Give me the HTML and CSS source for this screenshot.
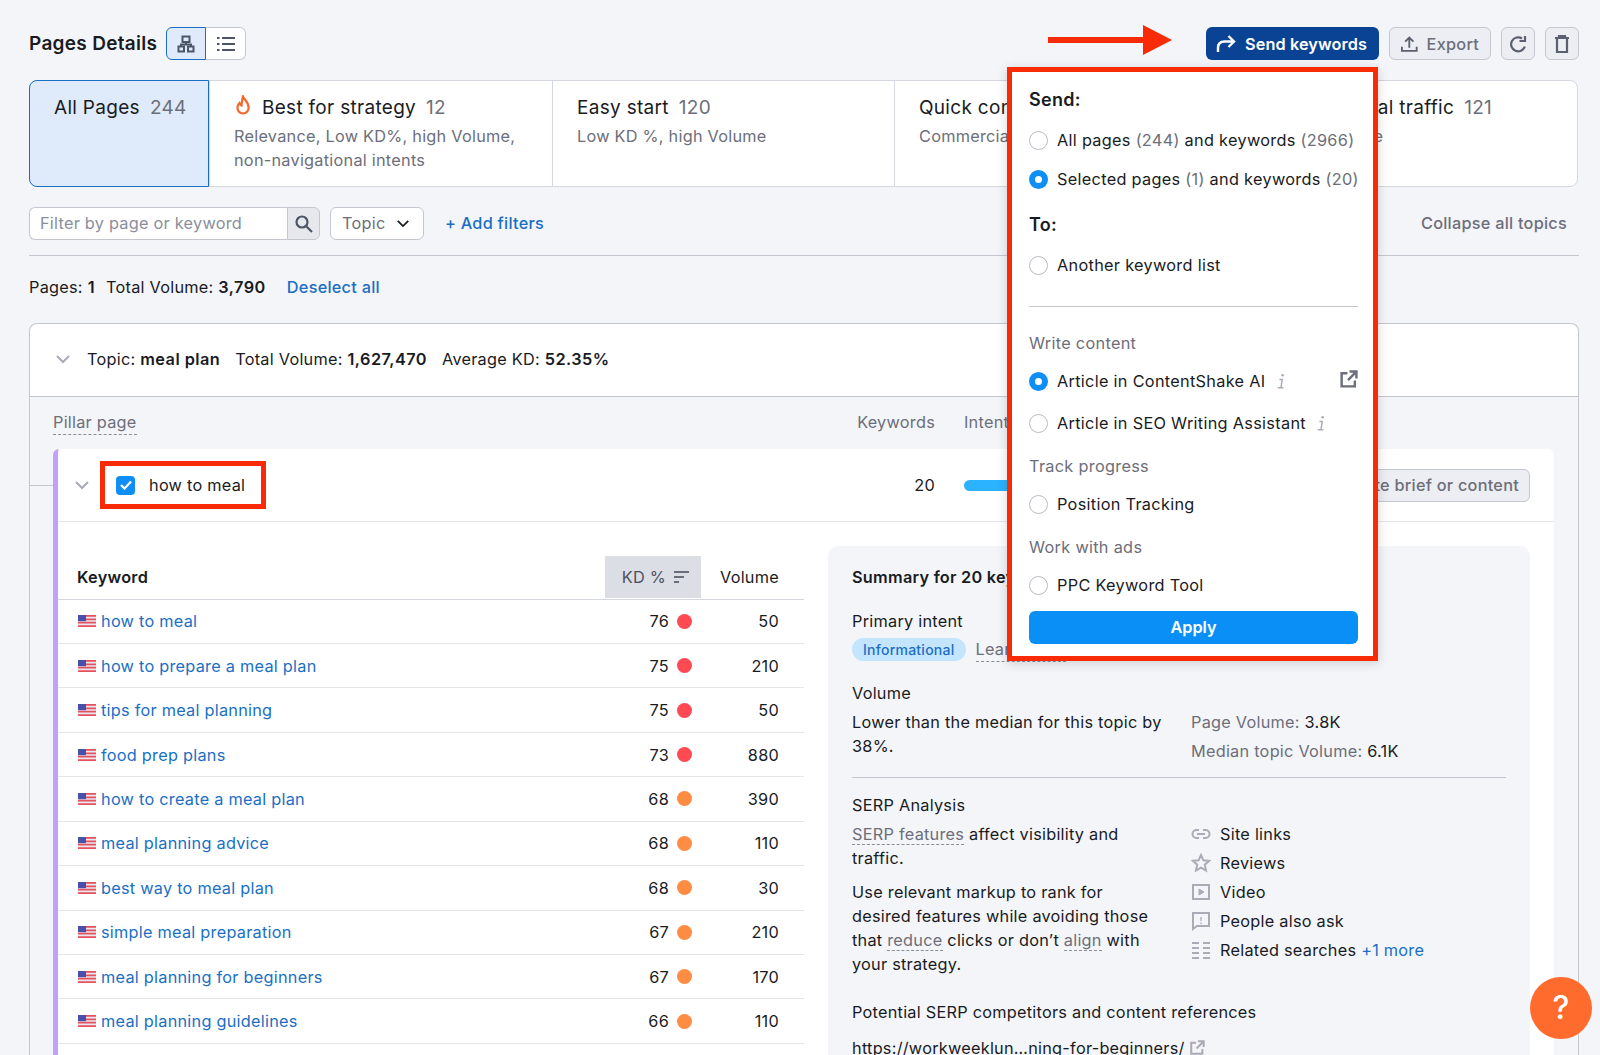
FILE: index.html
```html
<!DOCTYPE html>
<html lang="en">
<head>
<meta charset="utf-8">
<title>Pages Details</title>
<link rel="stylesheet" href="styles.css">
</head>
<body>
<svg class="defs" width="0" height="0" aria-hidden="true">
  <symbol id="flag" viewBox="0 0 18 12">
    <rect width="18" height="12" fill="#e8e8f0"/>
    <path d="M0 .9h18M0 4.3h18M0 7.7h18M0 11.1h18" stroke="#e8505b" stroke-width="1.7"/>
    <rect width="8" height="6.2" fill="#4a4fa8"/>
  </symbol>
  <symbol id="ext" viewBox="0 0 18 18">
    <path d="M8 3H2.500v12.500H15V10M10 1.500h6.500V8M16 2l-7.500 7.500" fill="none" stroke="currentColor" stroke-width="2.300"/>
  </symbol>
  <symbol id="info" viewBox="0 0 10 18">
    <circle cx="6.600" cy="3.200" r="1.300" fill="currentColor"/>
    <path d="M3.500 7.500h2.700l-1.200 8M1.800 15.800h5.600" fill="none" stroke="currentColor" stroke-width="1.500"/>
  </symbol>
  <symbol id="chev" viewBox="0 0 16 10">
    <path d="M2 2l6 6 6-6" fill="none" stroke="currentColor" stroke-width="2"/>
  </symbol>
</svg>

<main class="page">
  <header class="topbar">
    <h1 class="title">Pages Details</h1>
    <div class="toggle">
      <span class="toggle-btn on">
        <svg width="18" height="18" viewBox="0 0 18 18" fill="none" stroke="#4d5666" stroke-width="2"><rect x="5.500" y="1.500" width="7" height="5.500"/><rect x="1.500" y="11.500" width="5.500" height="5"/><rect x="11" y="11.500" width="5.500" height="5"/><path d="M9 7v2.500H4v2M9 9.500h5v2"/></svg>
      </span>
      <span class="toggle-btn">
        <svg width="18" height="18" viewBox="0 0 18 18" fill="none" stroke="#4d5666" stroke-width="2"><path d="M5 3h13M5 9h13M5 15h13M0 3h2.500M0 9h2.500M0 15h2.500"/></svg>
      </span>
    </div>
    <div class="actions">
      <button class="btn primary">
        <svg width="20" height="20" viewBox="0 0 20 20" fill="none" stroke="#fff" stroke-width="2.400"><path d="M2 18v-4c0-4 2.500-6.500 6.500-6.500H18M12.500 2L18 7.500 12.500 13"/></svg>
        Send keywords
      </button>
      <button class="btn ghost">
        <svg width="18" height="18" viewBox="0 0 18 18" fill="none" stroke="#5b6070" stroke-width="2"><path d="M9 13V2.500M4.500 6.500L9 2l4.500 4.500M1 12v4.500h16V12"/></svg>
        Export
      </button>
      <button class="btn ghost square">
        <svg width="18" height="18" viewBox="0 0 18 18" fill="none" stroke="#5b6070" stroke-width="2.200"><path d="M15.800 11.500A7 7 0 1 1 13 3.500"/><path d="M10.500 3.500h5.500V-1.500" transform="translate(0 2.500)"/></svg>
      </button>
      <button class="btn ghost square">
        <svg width="16" height="18" viewBox="0 0 16 18" fill="none" stroke="#5b6070" stroke-width="2.200"><path d="M1 3h14M5 3V1h6v2M3 3v14h10V3"/></svg>
      </button>
    </div>
  </header>

  <nav class="tabs">
    <div class="tab first"><div class="tab-name">All Pages <span class="count">244</span></div></div>
    <div class="tab">
      <div class="tab-name">
        <svg class="fire" width="18" height="21" viewBox="0 0 18 21" fill="none" stroke="#f4682c" stroke-width="2.200"><path d="M9 1.500c1 3 5.500 5.500 5.500 10.500A5.500 5.500 0 0 1 9 18.500 5.500 5.500 0 0 1 3.500 12.500c0-2 1-3.500 2-4.500.5 1.500 1 2 2 2.500C8 7.500 8 4 9 1.500z"/></svg>
        Best for strategy <span class="count">12</span>
      </div>
      <p class="tab-sub">Relevance, Low KD%, high Volume, non-navigational intents</p>
    </div>
    <div class="tab">
      <div class="tab-name">Easy start <span class="count">120</span></div>
      <p class="tab-sub">Low KD %, high Volume</p>
    </div>
    <div class="tab">
      <div class="tab-name">Quick conversions <span class="count">56</span></div>
      <p class="tab-sub">Commercial intent</p>
    </div>
    <div class="tab">
      <div class="tab-name last-name">Informational traffic <span class="count">121</span></div>
      <p class="tab-sub">Large audience</p>
    </div>
  </nav>

  <div class="filters">
    <div class="search">
      <span class="search-input">Filter by page or keyword</span>
      <span class="search-btn">
        <svg width="18" height="18" viewBox="0 0 18 18" fill="none" stroke="#4d5666" stroke-width="2.200"><circle cx="7" cy="7" r="5.500"/><path d="M11 11l6 6"/></svg>
      </span>
    </div>
    <div class="select">Topic <svg class="sel-chev" width="14" height="9"><use href="#chev"/></svg></div>
    <a class="add">+ Add filters</a>
    <span class="collapse">Collapse all topics</span>
  </div>

  <div class="summary-line">Pages: <b>1</b><span class="sp">Total Volume: <b>3,790</b></span><a class="link deselect">Deselect all</a></div>

  <section class="topic">
    <div class="topic-head">
      <svg class="chev" width="16" height="10"><use href="#chev"/></svg>
      <span>Topic: <b>meal plan</b></span>
      <span>Total Volume: <b>1,627,470</b></span>
      <span>Average KD: <b>52.35%</b></span>
    </div>
    <div class="topic-body">
      <div class="col-head">
        <span class="dash grey">Pillar page</span>
        <div class="cols grey">
          <span class="col-kw">Keywords</span>
          <span class="col-int">Intent</span>
        </div>
      </div>
      <div class="connector"></div>
      <article class="pillar">
        <div class="pillar-head">
          <svg class="chev pillar-chev" width="16" height="10"><use href="#chev"/></svg>
          <div class="marked">
            <span class="check"><svg width="12" height="10" viewBox="0 0 12 10" fill="none" stroke="#fff" stroke-width="2.200"><path d="M1 5l3.500 3.500L11 1.500"/></svg></span>
            how to meal
          </div>
          <div class="cols">
            <span class="col-kw">20</span>
            <span class="col-int"><span class="bar"></span></span>
            <button class="btn ghost create">Create brief or content</button>
          </div>
        </div>
        <div class="pillar-body">
          <div class="kw-table">
            <div class="kw-row kw-head">
              <b class="kw-name">Keyword</b>
              <span class="kw-kd sorted">KD %
                <svg width="15" height="12" viewBox="0 0 15 12" fill="none" stroke="#6c6e79" stroke-width="2"><path d="M0 1h15M0 6h10M0 11h5"/></svg>
              </span>
              <span class="kw-vol">Volume</span>
            </div>
            <div class="kw-row"><a class="kw-name"><svg class="flag"><use href="#flag"/></svg>how to meal</a><span class="kw-kd">76 <i class="dot red"></i></span><span class="kw-vol">50</span></div>
            <div class="kw-row"><a class="kw-name"><svg class="flag"><use href="#flag"/></svg>how to prepare a meal plan</a><span class="kw-kd">75 <i class="dot red"></i></span><span class="kw-vol">210</span></div>
            <div class="kw-row"><a class="kw-name"><svg class="flag"><use href="#flag"/></svg>tips for meal planning</a><span class="kw-kd">75 <i class="dot red"></i></span><span class="kw-vol">50</span></div>
            <div class="kw-row"><a class="kw-name"><svg class="flag"><use href="#flag"/></svg>food prep plans</a><span class="kw-kd">73 <i class="dot red"></i></span><span class="kw-vol">880</span></div>
            <div class="kw-row"><a class="kw-name"><svg class="flag"><use href="#flag"/></svg>how to create a meal plan</a><span class="kw-kd">68 <i class="dot orange"></i></span><span class="kw-vol">390</span></div>
            <div class="kw-row"><a class="kw-name"><svg class="flag"><use href="#flag"/></svg>meal planning advice</a><span class="kw-kd">68 <i class="dot orange"></i></span><span class="kw-vol">110</span></div>
            <div class="kw-row"><a class="kw-name"><svg class="flag"><use href="#flag"/></svg>best way to meal plan</a><span class="kw-kd">68 <i class="dot orange"></i></span><span class="kw-vol">30</span></div>
            <div class="kw-row"><a class="kw-name"><svg class="flag"><use href="#flag"/></svg>simple meal preparation</a><span class="kw-kd">67 <i class="dot orange"></i></span><span class="kw-vol">210</span></div>
            <div class="kw-row"><a class="kw-name"><svg class="flag"><use href="#flag"/></svg>meal planning for beginners</a><span class="kw-kd">67 <i class="dot orange"></i></span><span class="kw-vol">170</span></div>
            <div class="kw-row"><a class="kw-name"><svg class="flag"><use href="#flag"/></svg>meal planning guidelines</a><span class="kw-kd">66 <i class="dot orange"></i></span><span class="kw-vol">110</span></div>
          </div>

          <aside class="panel">
            <h3 class="panel-title">Summary for 20 keywords</h3>
            <h4 class="h-intent">Primary intent</h4>
            <div class="intent-row"><span class="pill">Informational</span><span class="dash grey">Learn more</span></div>
            <h4 class="h-volume">Volume</h4>
            <div class="two vol-two">
              <p>Lower than the median for this topic by 38%.</p>
              <div class="vol-stats">
                <div><span class="grey">Page Volume:</span> 3.8K</div>
                <div><span class="grey">Median topic Volume:</span> 6.1K</div>
              </div>
            </div>
            <hr class="panel-rule">
            <h4 class="h-serp">SERP Analysis</h4>
            <div class="two serp-two">
              <div>
                <p><span class="dash grey">SERP features</span> affect visibility and traffic.</p>
                <p class="para2">Use relevant markup to rank for desired features while avoiding those that <span class="dash grey">reduce</span> clicks or don’t <span class="dash grey">align</span> with your strategy.</p>
              </div>
              <ul class="features">
                <li><svg width="20" height="20" viewBox="0 0 20 20" fill="none" stroke="#a9acb6" stroke-width="2"><path d="M8 6H5.500a4 4 0 0 0 0 8H8M12 6h2.500a4 4 0 0 1 0 8H12M6 10h8"/></svg>Site links</li>
                <li><svg width="20" height="20" viewBox="0 0 20 20" fill="none" stroke="#a9acb6" stroke-width="2"><path d="M10 2l2.400 5.300 5.600.6-4.200 3.800 1.200 5.800L10 14.600l-5 2.900 1.200-5.800L2 7.900l5.600-.6z"/></svg>Reviews</li>
                <li><svg width="20" height="20" viewBox="0 0 20 20" fill="none" stroke="#a9acb6" stroke-width="2"><rect x="2" y="3" width="16" height="14"/><path d="M8 7l5 3-5 3z" fill="#a9acb6" stroke-width="1"/></svg>Video</li>
                <li><svg width="20" height="20" viewBox="0 0 20 20" fill="none" stroke="#a9acb6" stroke-width="2"><path d="M2 2h16v13H6l-4 3z"/><path d="M10 6v4M10 11.500v1.500" stroke-width="1.300"/></svg>People also ask</li>
                <li><svg width="20" height="20" viewBox="0 0 20 20" fill="none" stroke="#a9acb6" stroke-width="2"><path d="M1 3h7M12 3h7M1 8h7M12 8h7M1 13h7M12 13h7M1 18h7M12 18h7"/></svg>Related searches <a class="link">+1 more</a></li>
              </ul>
            </div>
            <h4 class="h-comp">Potential SERP competitors and content references</h4>
            <div class="url">https://workweeklun…ning-for-beginners/ <svg class="url-ext" width="16" height="16"><use href="#ext"/></svg></div>
          </aside>
        </div>
      </article>
    </div>
  </section>
</main>

<svg class="arrow" width="124" height="30" viewBox="0 0 124 30"><path d="M0 12h95V0l29 15-29 15V18H0z" fill="#f92a06"/></svg>

<div class="popup">
  <div class="pop-strong">Send:</div>
  <label class="opt m16"><i class="radio"></i>All pages&nbsp;<span class="grey">(244)</span>&nbsp;and keywords&nbsp;<span class="grey">(2966)</span></label>
  <label class="opt m15"><i class="radio sel"></i>Selected pages&nbsp;<span class="grey">(1)</span>&nbsp;and keywords&nbsp;<span class="grey">(20)</span></label>
  <div class="pop-strong m22">To:</div>
  <label class="opt m16"><i class="radio"></i>Another keyword list</label>
  <hr class="pop-rule">
  <div class="pop-group m24">Write content</div>
  <label class="opt m14"><i class="radio sel"></i>Article in ContentShake AI<svg class="info" width="10" height="18"><use href="#info"/></svg><svg class="pop-ext" width="19" height="19"><use href="#ext"/></svg></label>
  <label class="opt m18"><i class="radio"></i>Article in SEO Writing Assistant<svg class="info" width="10" height="18"><use href="#info"/></svg></label>
  <div class="pop-group m19">Track progress</div>
  <label class="opt m14"><i class="radio"></i>Position Tracking</label>
  <div class="pop-group m19">Work with ads</div>
  <label class="opt m14"><i class="radio"></i>PPC Keyword Tool</label>
  <button class="apply">Apply</button>
</div>

<div class="help">?</div>
</body>
</html>
```

FILE: styles.css
```css
* { box-sizing: border-box; }
html, body { margin: 0; height: 1055px; overflow: hidden; }
body {
  position: relative;
  background: #f4f5f9;
  color: #191b23;
  font: 400 16.3px/24px Inter, "Liberation Sans", sans-serif;
  letter-spacing: .25px;
}
.defs { position: absolute; }
b { font-weight: 600; letter-spacing: .45px; }
h1, h3, h4, p, ul { margin: 0; padding: 0; font-weight: 400; font-size: inherit; }
a { color: #1a6fc4; }
hr { border: 0; margin: 0; }
.grey { color: #6c6e79; }
.dash { border-bottom: 1px dashed #8a8e9b; }
.link { color: #1a6fc4; }

.page { height: 1055px; overflow: hidden; padding: 27px 21px 0 29px; }

/* top bar */
.topbar { display: flex; align-items: center; height: 33px; }
.title { font-size: 19px; font-weight: 600; letter-spacing: .3px; }
.toggle { display: flex; margin-left: 9px; height: 33px; }
.toggle-btn {
  width: 40px; display: flex; align-items: center; justify-content: center;
  background: #fff; border: 1px solid #c4c7cf; border-left: 0; border-radius: 0 6px 6px 0;
}
.toggle-btn.on {
  background: #dfeafa; border: 1px solid #1a6fc4; border-radius: 6px 0 0 6px;
}
.actions { margin-left: auto; display: flex; gap: 10px; }
.btn {
  display: inline-flex; align-items: center; gap: 9px; height: 33px; padding: 0 11px;
  border-radius: 6px; font: inherit; letter-spacing: inherit; white-space: nowrap;
}
.primary { width: 173px; padding-left: 10px; background: #0a4394; border: 0; color: #fff; font-weight: 600; letter-spacing: .1px; }
.ghost { width: 102px; background: #eceef3; border: 1px solid #c4c7cf; color: #6c6e79; font-weight: 500; }
.square { width: 34px; padding: 0; justify-content: center; }

/* tabs */
.tabs {
  display: grid; grid-template-columns: 179px 343px 342px 342px 1fr;
  margin: 20px 1px 0 0; height: 107px;
  background: #fff; border: 1px solid #d5d7de; border-radius: 8px;
}
.tab { padding: 13px 10px 0 24px; border-left: 1px solid #d5d7de; }
.tab.first {
  background: #dfeafa; border: 1px solid #1a6fc4; border-radius: 8px 0 0 8px; margin: -1px 0 -1px -1px; padding-top: 13px; padding-left: 24px;
}
.tab-name { font-size: 19px; letter-spacing: .3px; line-height: 28px; display: flex; gap: 10px; align-items: center; }
.last-name { margin-left: 11px; }
.count { color: #6c6e79; }
.fire { margin-top: -6px; }
.tab-sub { margin-top: 2px; color: #6c6e79; }

/* filters */
.filters {
  display: flex; align-items: flex-start; margin-top: 20px; height: 49px;
  border-bottom: 1px solid #c4c7cf;
}
.search { display: flex; width: 291px; height: 33px; }
.search-input {
  flex: 1; background: #fff; border: 1px solid #c4c7cf; border-right: 0; border-radius: 6px 0 0 6px;
  padding: 3px 10px 0; color: #8a8e9b;
}
.search-btn {
  width: 33px; display: flex; align-items: center; justify-content: center;
  background: #e6e8ee; border: 1px solid #c4c7cf; border-radius: 0 6px 6px 0;
}
.select {
  display: flex; align-items: center; justify-content: space-between;
  width: 94px; height: 33px; margin-left: 10px; padding: 0 13px 2px 11px;
  background: #fff; border: 1px solid #c4c7cf; border-radius: 6px; color: #6c6e79;
}
.sel-chev { color: #191b23; margin-top: 2px; }
.add { margin-left: 21px; line-height: 32px; font-weight: 500; }
.collapse { margin-left: auto; margin-right: 12px; line-height: 32px; color: #6c6e79; font-weight: 500; }

.summary-line { margin-top: 19px; height: 24px; white-space: nowrap; }
.sp { margin-left: 11px; }
.deselect { margin-left: 21px; font-weight: 500; }

/* topic */
.topic {
  margin-top: 24px; height: 740px; overflow: hidden; background: #f4f5f9;
  border: 1px solid #c4c7cf; border-bottom: 0; border-radius: 8px 8px 0 0; position: relative;
}
.topic-head {
  display: flex; align-items: center; gap: 15px; height: 73px; padding: 0 0 2px 25px;
  background: #fff; border-bottom: 1px solid #c4c7cf; border-radius: 8px 8px 0 0;
}
.chev { color: #a9acb6; }
.topic-head .chev { margin-right: 1px; }
.col-head { display: flex; align-items: center; height: 52px; padding: 0 48px 2px 23px; }
.cols { display: flex; align-items: center; margin-left: auto; width: 674px; }
.col-kw { width: 79px; text-align: right; }
.col-int { margin-left: 29px; }
.connector { position: absolute; left: 0; top: 161px; width: 24px; height: 1px; background: #c4c7cf; }
.pillar {
  position: relative; margin: 0 24px 0 23px; height: 640px; background: #fff;
  border-left: 5px solid #c3a0f7; border-radius: 6px 6px 0 0;
}
.pillar-head {
  display: flex; align-items: center; height: 73px; padding: 0 24px 0 16px; border-bottom: 1px solid #e4e6ec;
}
.pillar-chev { flex: none; }
.marked {
  display: flex; align-items: center; gap: 14px;
  width: 166px; height: 48px; margin-left: 10px; padding-left: 11px;
  border: 5px solid #f92a06;
}
.check {
  width: 19px; height: 19px; border-radius: 4px; background: #0f8ff5;
  display: flex; align-items: center; justify-content: center;
}
.bar { display: block; width: 90px; height: 11px; border-radius: 6px; background: #2bb3ff; }
.create { width: 210px; margin-left: auto; justify-content: flex-end; padding-right: 10px; }

.pillar-body { display: flex; padding: 24px 24px 0 0; }

/* table */
.kw-table { width: 746px; padding-top: 9.5px; }
.kw-row {
  display: flex; align-items: center; height: 44.45px; border-bottom: 1px solid #e4e6ec;
}
.kw-head { height: 44px; padding-bottom: 1px; border-bottom-color: #d5d7de; }
.kw-name { display: flex; align-items: center; flex: 1; padding-left: 20px; font-weight: 400; letter-spacing: .25px; }
.kw-head .kw-name { font-weight: 600; padding-left: 19px; }
.flag { width: 18px; height: 12px; margin-right: 5px; }
.kw-kd {
  display: flex; align-items: center; justify-content: flex-end; gap: 8px;
  width: 96px; height: 100%; padding-right: 9px;
}
.sorted { background: #dcdee6; gap: 8px; padding-right: 12px; color: #4d5060; }
.dot { width: 15px; height: 15px; border-radius: 50%; }
.red { background: #ff4953; }
.orange { background: #ff8c43; }
.kw-vol { width: 103px; text-align: right; padding-right: 25px; }

/* panel */
.panel {
  flex: 1; margin-left: 24px; height: 600px; padding: 19px 24px 0; background: #f4f5f9; border-radius: 10px 10px 0 0;
}
.panel-title { font-weight: 600; }
.h-intent { margin-top: 20px; }
.intent-row { display: flex; align-items: center; gap: 10px; margin-top: 5px; height: 23px; }
.pill {
  padding: 0 11px; line-height: 23px; border-radius: 12px; background: #c4e5fe; color: #1a6fc4;
  font-size: 14px; font-weight: 500;
}
.h-volume { margin-top: 20px; }
.two { display: grid; grid-template-columns: 318px 1fr; column-gap: 21px; margin-top: 5px; }
.vol-two { height: 48px; }
.serp-two { grid-template-columns: 312px 1fr; column-gap: 27px; }
.vol-stats div { height: 29px; }
.panel-rule { height: 1px; background: #c4c7cf; margin-top: 19px; }
.h-serp { margin-top: 15px; }
.para2 { margin-top: 10px; }
.features { list-style: none; margin-top: -3px; }
.features li { display: flex; align-items: center; height: 29px; white-space: pre; }
.features svg { margin-right: 9px; }
.h-comp { margin-top: 24px; }
.url { margin-top: 12px; display: flex; align-items: center; gap: 4px; }
.url-ext { color: #a9acb6; }

/* overlays */
.arrow { position: absolute; left: 1048px; top: 25px; }
.popup {
  position: absolute; left: 1007px; top: 67px; width: 371px; height: 594px;
  padding: 16px 15px 0 17px; background: #fff; border: 5px solid #f92a06;
  box-shadow: 0 2px 10px rgba(25, 27, 35, .18);
  letter-spacing: .3px;
}
.pop-strong { font-size: 18px; font-weight: 600; }
.pop-group { color: #6c6e79; }
.opt { display: flex; align-items: center; height: 24px; white-space: nowrap; }
.radio {
  flex: none; width: 19px; height: 19px; margin-right: 9px; border-radius: 50%;
  background: #fff; border: 1px solid #b8bbc5;
}
.radio.sel { background: #fff; border: 6px solid #0f8ff5; }
.info { margin-left: 10px; color: #a9acb6; }
.pop-ext { margin-left: auto; color: #6c6e79; margin-top: -4px; }
.pop-rule { height: 1px; background: #c4c7cf; margin-top: 29px; }
.m14 { margin-top: 14px; }
.m15 { margin-top: 15px; }
.m16 { margin-top: 16px; }
.m18 { margin-top: 18px; }
.m19 { margin-top: 19px; }
.m22 { margin-top: 22px; }
.m24 { margin-top: 24px; }
.apply {
  display: block; width: 100%; height: 33px; margin-top: 14px; padding: 0; border: 0; border-radius: 6px;
  background: #0a8ff7; color: #fff; font: 600 16.300px/33px Inter, "Liberation Sans", sans-serif;
}
.help {
  position: absolute; left: 1530px; top: 977px; width: 62px; height: 62px; border-radius: 50%;
  background: #ff6b2c; color: #fff; font-size: 32px; font-weight: 500; line-height: 62px; text-align: center;
}
```
